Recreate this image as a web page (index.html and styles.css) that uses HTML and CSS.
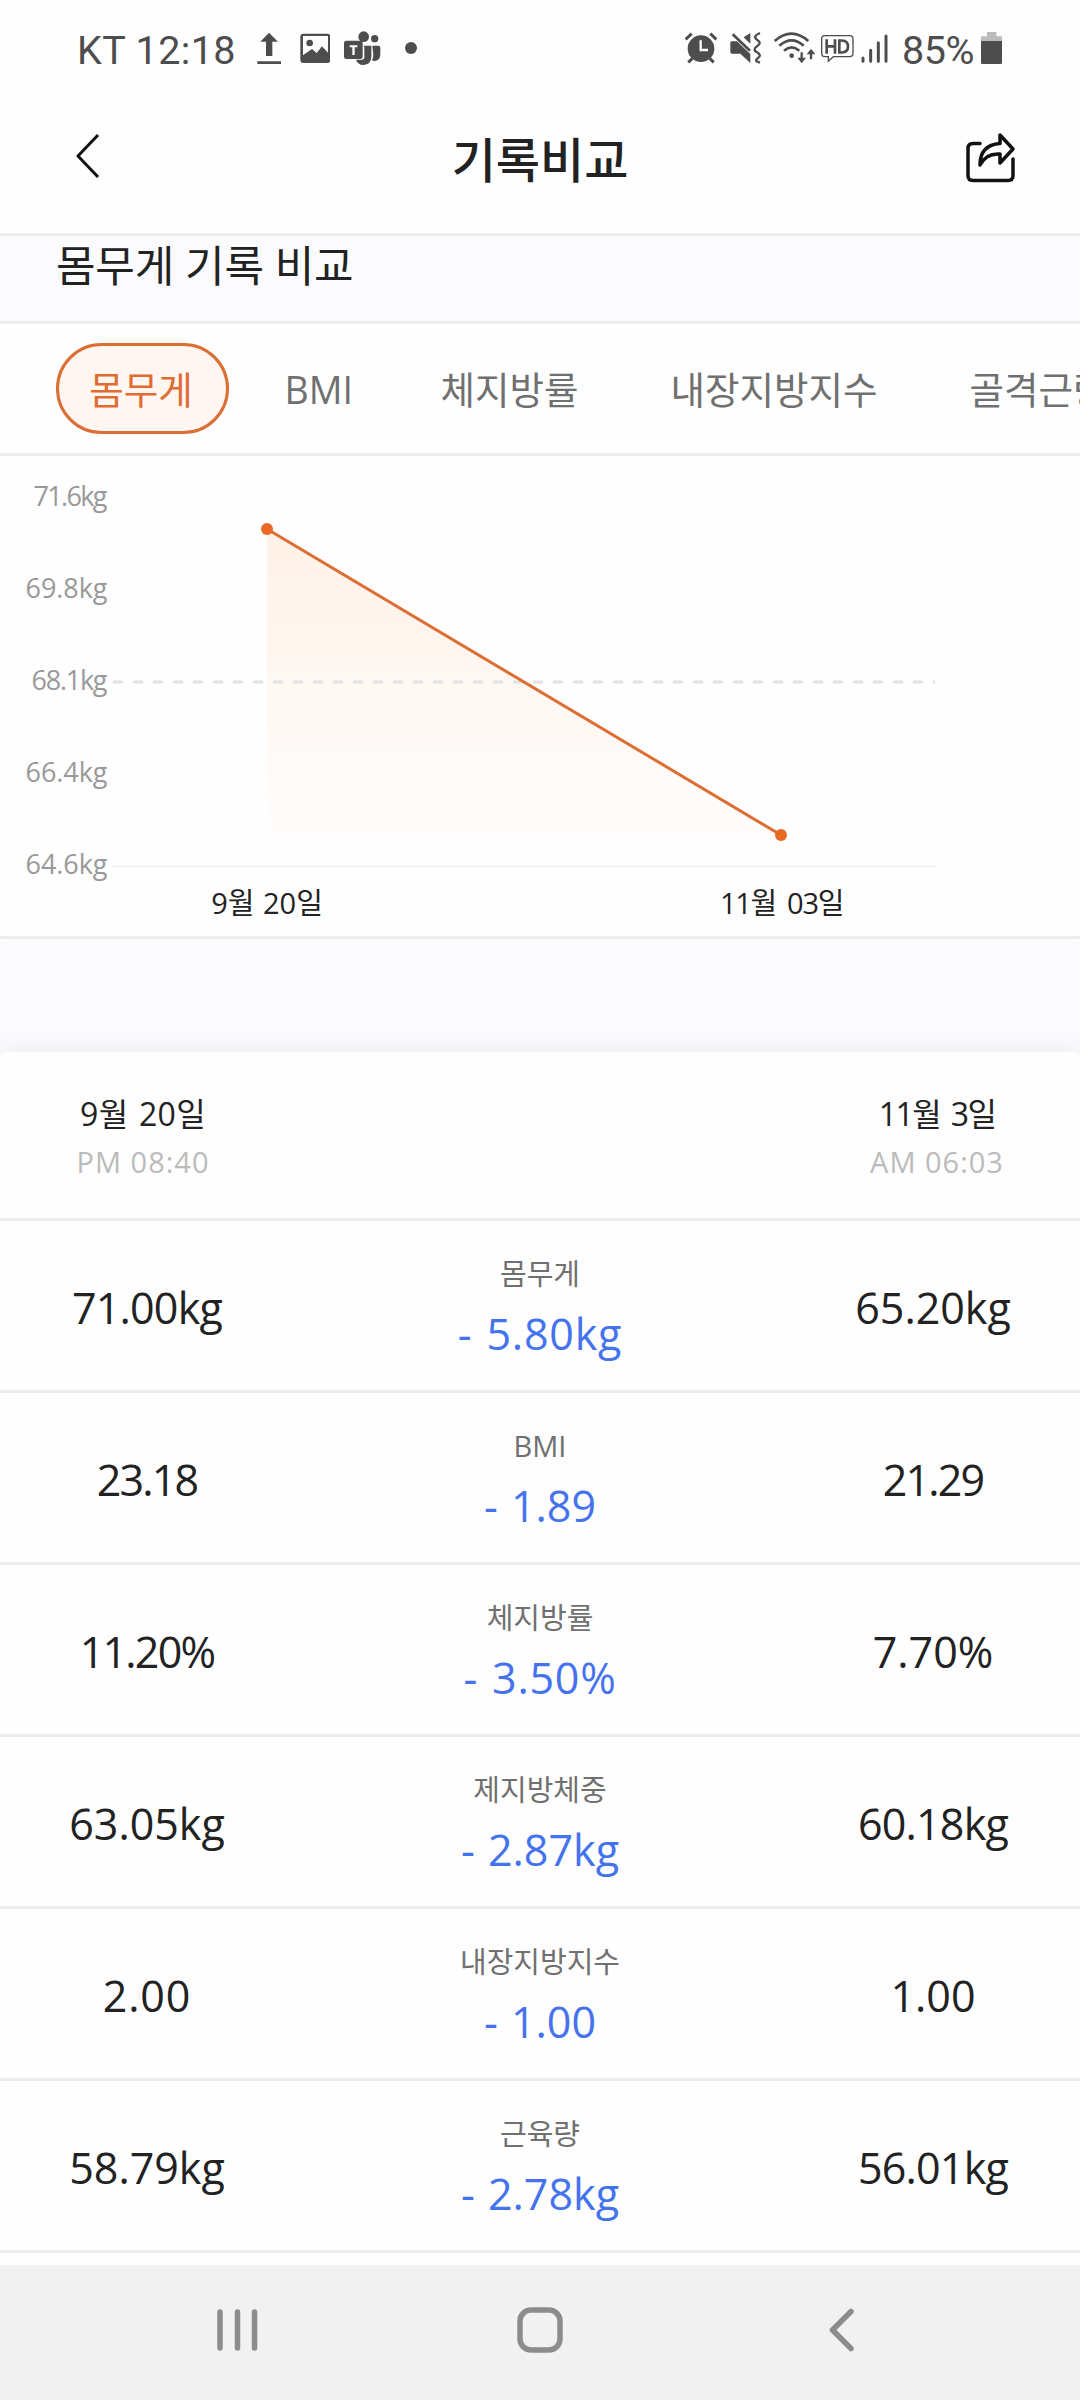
FILE: index.html
```html
<!DOCTYPE html>
<html lang="ko">
<head>
<meta charset="utf-8">
<title>기록비교</title>
<link rel="stylesheet" href="styles.css">
</head>
<body>
<div class="screen">
  <div class="status">
    <span class="status-text">KT 12:18</span>
    <svg class="ic upload" width="24" height="36" viewBox="590 60 72 108"><path d="M626 68l27 27h-17v43h-19V95h-17zM591 154h71v8h-71z"/></svg>
    <svg class="ic photo" width="30" height="36" viewBox="720 60 90 108"><path fill-rule="evenodd" d="M730 71h72q9 0 9 9v70q0 9-9 9h-72q-9 0-9-9V80q0-9 9-9zm-1 7v58l27-19 14 12 16-20 18 19V78z"/><circle cx="749" cy="99" r="10"/></svg>
    <svg class="ic teams" width="37" height="36" viewBox="851 60 111 108"><circle cx="910" cy="80" r="16"/><circle cx="943" cy="86" r="11"/><path d="M936 107h18q6 0 6 6v20q0 19-18 20-4 0-7-2 4-8 4-16zM910 107h23v32q0 25-24 26-17-1-22-16h17q8 0 8-8v-29q0-3-2-5z"/><rect x="851" y="92" width="56" height="55" rx="7"/><path class="cut" d="M868 106h23v6h-8v23h-7v-23h-8z"/></svg>
    <svg class="ic dot" width="12" height="36" viewBox="1034 60 36 108"><circle cx="1052" cy="114" r="18"/></svg>
    <svg class="ic alarm" width="32" height="36" viewBox="75 60 96 108"><circle cx="123" cy="116" r="40"/><path class="ln" d="M77 88l18-17M169 88l-18-17M85 157l12-12M161 157l-12-12" stroke-width="9"/><path class="cut-ln" d="M122 91v29h22" stroke-width="7"/></svg>
    <svg class="ic mute" width="32" height="36" viewBox="210 60 96 108"><path d="M211 98q0-4 5-4h15l40 38v27l-30-28h-25q-5 0-5-5zM271 69v32l-20-19z"/><path class="ln" d="M218 73l52 49" stroke-width="8"/><path class="ln" d="M300 69q-24 10-9 20 16 10 0 20-15 10 0 18 16 9 2 18-12 9 7 13" stroke-width="7"/></svg>
    <svg class="ic wifi" width="42" height="36" viewBox="341 60 126 108"><path class="ln" d="M343 93q50-44 101 0M357 107q37-32 73 0M371 122q23-20 46 0" stroke-width="8"/><circle cx="394" cy="137" r="7"/><path class="ln" d="M424 127v24M452 148v-23" stroke-width="7"/><path d="M411 143h26l-13 17zM439 133h26l-13-17z"/></svg>
    <svg class="ic hd" width="33" height="36" viewBox="482 60 99 108"><path class="ln" d="M493 77h75q10 0 10 10v43q0 10-10 10h-49l-15 14v-14h-11q-9 0-9-10V87q0-10 9-10z" stroke-width="4"/><path class="ln" d="M499 88v43M524 88v43M499 109h25M537 91.500v36h8q18-1 18-18t-18-18z" stroke-width="8"/></svg>
    <svg class="ic signal" width="28" height="36" viewBox="604 60 84 108"><path class="ln rnd" d="M610 144v10M633 121v33M656 98v56M679 78v76" stroke-width="9"/></svg>
    <span class="status-text pct">85%</span>
    <svg class="ic battery" width="21" height="36" viewBox="965 60 63 108"><path class="pale" d="M983 66h28v13h17v16h-63V79h18z"/><path d="M965 93h63v65q0 4-4 4h-55q-4 0-4-4z"/></svg>
  </div>

  <header class="appbar">
    <svg class="back" width="26" height="46" viewBox="0 0 26 46"><path d="M23 2L3 23l20 21"/></svg>
    <h1>기록비교</h1>
    <svg class="share" width="50" height="52" viewBox="0 0 50 52"><path d="M14 11.500H7Q2 11.500 2 16.500V43.500Q2 48.500 7 48.500H42Q47 48.500 47 43.500V27M34 3L47 17 34 31V22Q20 21 14 33 14 13 34 11.500Z"/></svg>
  </header>

  <section class="section-title"><h2>몸무게 기록 비교</h2></section>

  <nav class="tabs">
    <span class="tab active">몸무게</span>
    <span class="tab bmi">BMI</span>
    <span class="tab fat">체지방률</span>
    <span class="tab visceral">내장지방지수</span>
    <span class="tab muscle">골격근량</span>
  </nav>

  <section class="chart">
    <svg width="1080" height="480" viewBox="0 0 1080 480">
      <defs>
        <linearGradient id="area" x1="0" y1="0" x2="0" y2="1">
          <stop offset="0" stop-color="#fff1e7"/>
          <stop offset="0.500" stop-color="#fff8f3"/>
          <stop offset="1" stop-color="#fefefe"/>
        </linearGradient>
      </defs>
      <path d="M267 73L781 379V410H267Z" fill="url(#area)"/>
      <path class="grid-mid" d="M113 226H935"/>
      <path class="grid-base" d="M113 410.500H935"/>
      <path class="series" d="M267 73L781 379"/>
      <circle class="point" cx="267" cy="73" r="6"/>
      <circle class="point" cx="781" cy="379" r="6"/>
      <g class="y-labels">
        <text x="107.500" y="49.500" textLength="74">71.6kg</text>
        <text x="107.500" y="141.500" textLength="82">69.8kg</text>
        <text x="107.500" y="233.500" textLength="76">68.1kg</text>
        <text x="107.500" y="325.500" textLength="82">66.4kg</text>
        <text x="107.500" y="417.500" textLength="82">64.6kg</text>
      </g>
      <g class="x-labels">
        <text x="267" y="458">9월 20일</text>
        <text class="nov" x="781.500" y="458">11월 03일</text>
      </g>
    </svg>
  </section>

  <main class="card">
    <div class="dates">
      <div><p class="date">9월 20일</p><p class="time">PM 08:40</p></div>
      <div><p class="date nov">11월 3일</p><p class="time">AM 06:03</p></div>
    </div>
    <div class="row"><p class="val t1">71.00kg</p><div class="mid"><p class="name">몸무게</p><p class="diff">- 5.80kg</p></div><p class="val">65.20kg</p></div>
    <div class="row"><p class="val t2">23.18</p><div class="mid"><p class="name">BMI</p><p class="diff t0">- 1.89</p></div><p class="val t2">21.29</p></div>
    <div class="row"><p class="val t2">11.20%</p><div class="mid"><p class="name">체지방률</p><p class="diff">- 3.50%</p></div><p class="val">7.70%</p></div>
    <div class="row"><p class="val">63.05kg</p><div class="mid"><p class="name">제지방체중</p><p class="diff t0">- 2.87kg</p></div><p class="val t1">60.18kg</p></div>
    <div class="row"><p class="val w1">2.00</p><div class="mid"><p class="name">내장지방지수</p><p class="diff t0">- 1.00</p></div><p class="val">1.00</p></div>
    <div class="row"><p class="val">58.79kg</p><div class="mid"><p class="name">근육량</p><p class="diff t0">- 2.78kg</p></div><p class="val t1">56.01kg</p></div>
  </main>

  <footer class="navbar">
    <svg width="42" height="46" viewBox="0 0 42 46"><path d="M3 5v36M20.500 5v36M37.500 5v36" stroke-width="5.500"/></svg>
    <svg class="home" width="46" height="46" viewBox="0 0 46 46"><rect x="3" y="3" width="40" height="40" rx="11" stroke-width="5.500"/></svg>
    <svg width="28" height="46" viewBox="0 0 28 46"><path d="M23 4.500L4.500 23 23 41.500" stroke-width="5.500"/></svg>
  </footer>
</div>
</body>
</html>
```
FILE: styles.css
```css
* { box-sizing: border-box; }

body {
  margin: 0;
  background: #fefefe;
  color: #222;
  font-family: "Open Sans", "Noto Sans CJK KR", sans-serif;
}

h1, h2, p { margin: 0; font-weight: 400; white-space: nowrap; }

.screen {
  width: 1080px;
  height: 2400px;
  overflow: hidden;
  display: flex;
  flex-direction: column;
}

.screen > * { flex: none; }

/* Status bar */
.status {
  display: flex;
  height: 96px;
  padding: 30px 0 0 77px;
  color: #4d4d4d;
}

.status-text {
  width: 162px;
  font: 39.500px/41px Roboto, sans-serif;
  letter-spacing: 0.400px;
  white-space: nowrap;
}

.status-text.pct { width: 72px; margin-left: 13px; letter-spacing: -0.500px; }

.ic { flex: none; fill: #4d4d4d; }
.ic .cut { fill: #fefefe; }
.ic .pale { fill: #bbb; }
.ic .ln { fill: none; stroke: #4d4d4d; }
.ic .rnd { stroke-linecap: round; }
.ic .cut-ln { fill: none; stroke: #fefefe; }

.upload { margin-left: 18px; }
.photo { margin-left: 19px; }
.teams { margin-left: 14px; }
.dot { margin-left: 24px; }
.alarm { margin-left: 268px; }
.mute { margin-left: 13px; }
.wifi { margin-left: 12px; }
.hd { margin-left: 5px; }
.signal { margin-left: 7px; }
.battery { margin-left: 7px; }

/* App bar */
.appbar {
  display: flex;
  justify-content: space-between;
  height: 137px;
  padding: 36px 64px 0 75px;
}

.appbar h1 {
  margin: 2px 0 0 13px;
  font-size: 48px;
  font-weight: 500;
  line-height: 52px;
}

.appbar svg { fill: none; stroke: #111; stroke-width: 3; stroke-linejoin: round; }
.appbar .back { margin-top: 1px; }
.appbar .share { stroke-width: 3.500; stroke-linecap: round; }

/* Section title */
.section-title {
  height: 91px;
  padding: 4px 0 0 56px;
  border: solid #ededed;
  border-width: 3px 0;
  background: #fbfbfd;
}

.section-title h2 { font-size: 43px; line-height: 52px; letter-spacing: -0.200px; }

/* Tabs */
.tabs {
  display: flex;
  height: 132px;
  padding: 19px 0 0 56px;
  border-bottom: 3px solid #ededed;
  overflow: hidden;
}

.tab {
  flex: none;
  height: 91px;
  font-size: 37.500px;
  line-height: 94px;
  color: #707070;
}

.tab.active {
  width: 173px;
  padding-right: 3px;
  border: 3px solid #dc6d33;
  border-radius: 46px;
  background: #fff6f2;
  color: #e06c30;
  line-height: 88px;
  text-align: center;
}

.bmi { width: 156px; margin-left: 55.500px; }
.fat { width: 230px; }
.visceral { width: 299px; }

/* Chart */
.chart { height: 483px; border-bottom: 3px solid #ededed; }
.chart svg { display: block; }
.grid-mid { stroke: #e2e2e2; stroke-width: 3; stroke-dasharray: 10 10; }
.grid-base { stroke: #ededed; stroke-width: 1; }
.series { stroke: #dc6d33; stroke-width: 3; }
.point { fill: #ea6a25; }
.y-labels { font-size: 27px; fill: #999; text-anchor: end; }
.x-labels { font-size: 29px; fill: #222; text-anchor: middle; word-spacing: 1px; }
.x-labels .nov { letter-spacing: -1.300px; word-spacing: 5px; }

/* Comparison card */
.card {
  position: relative;
  height: 1213px;
  margin-top: 113px;
  border-radius: 6px 6px 0 0;
  background: #fefefe;
  box-shadow: 0 0 24px rgba(0, 0, 0, 0.08), 0 -113px 0 #fbfbfd;
}

.dates {
  display: flex;
  justify-content: space-between;
  height: 169px;
  padding: 42px 0 0;
  border-bottom: 3px solid #ededed;
  text-align: center;
}

.dates div { width: 286px; }
.date { font-size: 32px; line-height: 40px; letter-spacing: 0.300px; word-spacing: 2px; }
.date.nov { letter-spacing: -1.600px; word-spacing: 4px; }
.time { margin-top: 8px; font-size: 29px; line-height: 40px; letter-spacing: 1px; color: #bbb; }

.row {
  display: grid;
  grid-template-columns: 294px 492px 294px;
  height: 172px;
  border-bottom: 3px solid #ededed;
  text-align: center;
}

.val { padding-top: 57px; font-size: 43px; line-height: 60px; }
.mid { padding: 33px 0 0; }
.name { font-size: 29px; line-height: 40px; color: #707070; }
.diff {
  margin-top: 10px;
  font-size: 43px;
  line-height: 60px;
  letter-spacing: 0.800px;
  word-spacing: 2px;
  color: #4573ee;
}
.t0 { letter-spacing: 0; }
.t1 { letter-spacing: -0.800px; }
.t2 { letter-spacing: -1.800px; }
.w1 { letter-spacing: 0.900px; }

/* System navigation */
.navbar {
  position: relative;
  display: flex;
  justify-content: space-between;
  height: 135px;
  padding: 42px 224px 0 217px;
  background: #f1f1f1;
}

.navbar svg { fill: none; stroke: #8c8c8c; stroke-linecap: round; stroke-linejoin: round; }
.navbar .home { margin-right: 7px; }
```
